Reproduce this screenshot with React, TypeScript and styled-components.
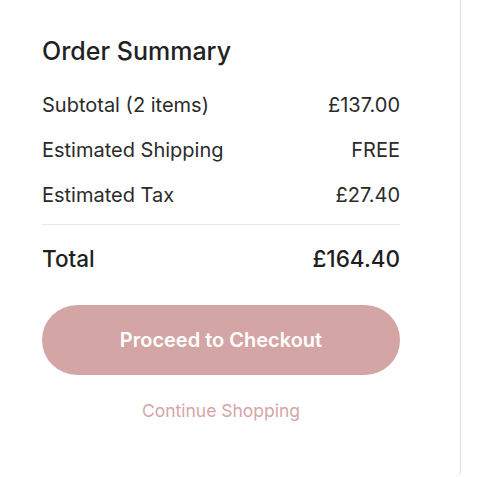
import React from "react";
import styled, { createGlobalStyle } from "styled-components";

const Global = createGlobalStyle`
  html, body { margin: 0; padding: 0; background: #ffffff; }
  body { font-family: Inter, "Noto Sans", sans-serif; }
`;

const Page = styled.div`
  width: 500px;
  height: 477px;
  display: flex;
  background: #fff;
`;

const Panel = styled.aside`
  width: 461px;
  height: 477px;
  box-sizing: border-box;
  border-right: 1px solid #e2e2e2;
  border-bottom-right-radius: 6px;
  padding: 36px 60px 0 42px;
  display: flex;
  flex-direction: column;
`;

const Title = styled.h2`
  margin: 0 0 16px;
  font-size: 25px;
  font-weight: 450;
  line-height: 30px;
  color: #222;
`;

const Row = styled.div<{ $total?: boolean }>`
  display: flex;
  justify-content: space-between;
  align-items: center;
  height: ${(p) => (p.$total ? "34px" : "45px")};
  font-size: ${(p) => (p.$total ? "22.5px" : "20px")};
  font-weight: ${(p) => (p.$total ? 500 : 400)};
  color: ${(p) => (p.$total ? "#1f1f1f" : "#2b2b2b")};
`;

const Divider = styled.hr`
  border: none;
  border-top: 1px solid #e5e7eb;
  margin: 7px 0 16px;
`;

const CheckoutButton = styled.button`
  margin-top: 30px;
  height: 70px;
  width: 100%;
  border: none;
  border-radius: 35px;
  background: #d4a5a5;
  color: #fff;
  font-family: Inter, "Noto Sans", sans-serif;
  font-size: 20px;
  font-weight: 600;
  cursor: pointer;
`;

const ContinueLink = styled.a`
  margin-top: 24px;
  text-align: center;
  font-size: 17.5px;
  color: #d6a5a5;
  text-decoration: none;
  line-height: 24px;
`;

const rows = [
  ["Subtotal (2 items)", "£137.00"],
  ["Estimated Shipping", "FREE"],
  ["Estimated Tax", "£27.40"],
];

export default function App() {
  return (
    <>
      <Global />
      <Page>
        <Panel>
          <Title>Order Summary</Title>
          {rows.map(([l, v]) => (
            <Row key={l}>
              <span>{l}</span>
              <span>{v}</span>
            </Row>
          ))}
          <Divider />
          <Row $total>
            <span>Total</span>
            <span>£164.40</span>
          </Row>
          <CheckoutButton>Proceed to Checkout</CheckoutButton>
          <ContinueLink href="#">Continue Shopping</ContinueLink>
        </Panel>
      </Page>
    </>
  );
}
